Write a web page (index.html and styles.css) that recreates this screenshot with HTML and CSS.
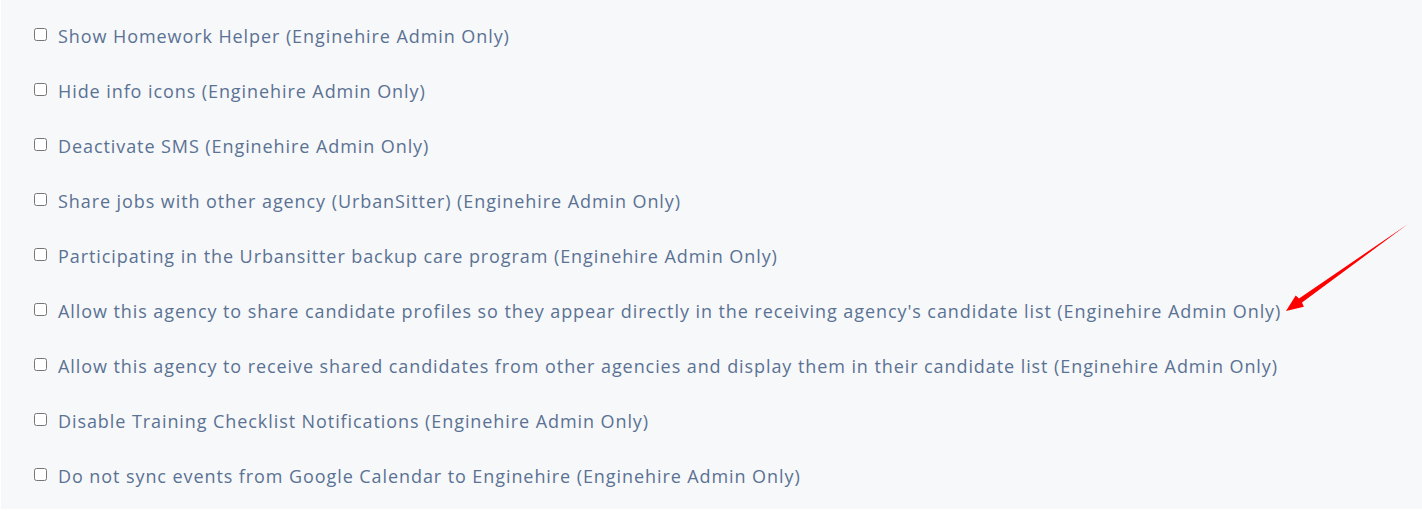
FILE: index.html
```html
<!DOCTYPE html>
<html>
<head>
<meta charset="utf-8">
<link rel="stylesheet" href="styles.css">
</head>
<body>
<div class="panel">
  <ul class="options">
    <li class="option"><input type="checkbox" class="box"><span class="label">Show Homework Helper (Enginehire Admin Only)</span></li>
    <li class="option"><input type="checkbox" class="box"><span class="label">Hide info icons (Enginehire Admin Only)</span></li>
    <li class="option"><input type="checkbox" class="box"><span class="label">Deactivate SMS (Enginehire Admin Only)</span></li>
    <li class="option"><input type="checkbox" class="box"><span class="label">Share jobs with other agency (UrbanSitter) (Enginehire Admin Only)</span></li>
    <li class="option"><input type="checkbox" class="box"><span class="label">Participating in the Urbansitter backup care program (Enginehire Admin Only)</span></li>
    <li class="option"><input type="checkbox" class="box"><span class="label">Allow this agency to share candidate profiles so they appear directly in the receiving agency's candidate list (Enginehire Admin Only)</span></li>
    <li class="option"><input type="checkbox" class="box"><span class="label">Allow this agency to receive shared candidates from other agencies and display them in their candidate list (Enginehire Admin Only)</span></li>
    <li class="option"><input type="checkbox" class="box"><span class="label">Disable Training Checklist Notifications (Enginehire Admin Only)</span></li>
    <li class="option"><input type="checkbox" class="box"><span class="label">Do not sync events from Google Calendar to Enginehire (Enginehire Admin Only)</span></li>
  </ul>
  <svg class="arrow" width="1422" height="511" viewBox="0 0 1422 511">
    <polygon fill="#ff0000" points="1286,311 1295.7,295.4 1299,298.6 1408,224 1302,302.6 1303.9,306.8"/>
  </svg>
</div>
</body>
</html>
```

FILE: styles.css
```css
html, body {
  margin: 0;
  padding: 0;
  background: #ffffff;
}
.panel {
  position: relative;
  margin: 0 0 2px 1px;
  height: 509px;
  background: #f7f8fa;
  overflow: hidden;
}
.options {
  list-style: none;
  margin: 0;
  padding: 8px 0 0 33px;
}
.option {
  display: flex;
  align-items: center;
  height: 55px;
}
.box {
  margin: 0 11px 3px 0;
  width: 13px;
  height: 13px;
  flex: none;
}
.label {
  font-family: "Open Sans", "Noto Sans", sans-serif;
  font-size: 18px;
  letter-spacing: 0.92px;
  color: #5a7293;
  white-space: nowrap;
}
.arrow {
  position: absolute;
  left: -1px;
  top: 0;
  pointer-events: none;
}
```
